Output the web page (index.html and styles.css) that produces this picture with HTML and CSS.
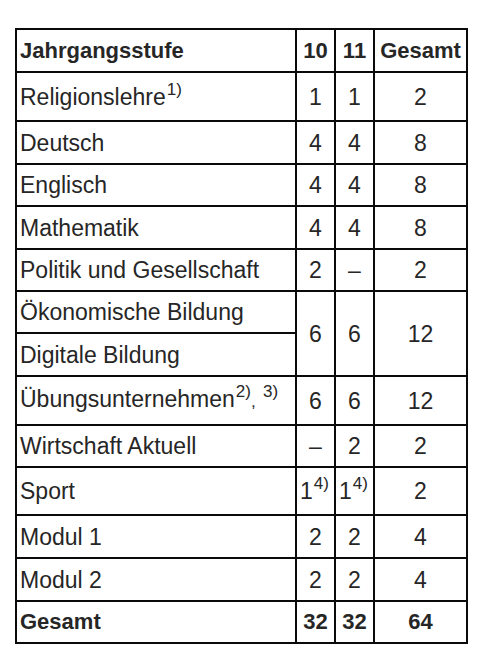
FILE: index.html
```html
<!DOCTYPE html>
<html lang="de">
<head>
<meta charset="utf-8">
<title>Stundentafel</title>
<link rel="stylesheet" href="styles.css">
</head>
<body>
<table class="plan">
  <colgroup>
    <col class="c-subject">
    <col class="c-year">
    <col class="c-year">
    <col class="c-total">
  </colgroup>
  <thead>
    <tr class="r43">
      <th class="subj">Jahrgangsstufe</th>
      <th>10</th>
      <th>11</th>
      <th>Gesamt</th>
    </tr>
  </thead>
  <tbody>
    <tr class="r49">
      <td class="subj">Religionslehre<sup>1)</sup></td>
      <td>1</td><td>1</td><td>2</td>
    </tr>
    <tr class="r43">
      <td class="subj">Deutsch</td>
      <td>4</td><td>4</td><td>8</td>
    </tr>
    <tr class="r42">
      <td class="subj">Englisch</td>
      <td>4</td><td>4</td><td>8</td>
    </tr>
    <tr class="r43">
      <td class="subj">Mathematik</td>
      <td>4</td><td>4</td><td>8</td>
    </tr>
    <tr class="r42">
      <td class="subj">Politik und Gesellschaft</td>
      <td>2</td><td>–</td><td>2</td>
    </tr>
    <tr class="r42">
      <td class="subj">Ökonomische Bildung</td>
      <td rowspan="2">6</td><td rowspan="2">6</td><td rowspan="2">12</td>
    </tr>
    <tr class="r43">
      <td class="subj">Digitale Bildung</td>
    </tr>
    <tr class="r49">
      <td class="subj">Übungsunternehmen<sup>2)</sup><span class="comma">,</span> <sup>3)</sup></td>
      <td>6</td><td>6</td><td>12</td>
    </tr>
    <tr class="r42">
      <td class="subj">Wirtschaft Aktuell</td>
      <td>–</td><td>2</td><td>2</td>
    </tr>
    <tr class="r48">
      <td class="subj">Sport</td>
      <td class="tight">1<sup>4)</sup></td><td class="tight">1<sup>4)</sup></td><td>2</td>
    </tr>
    <tr class="r43">
      <td class="subj">Modul 1</td>
      <td>2</td><td>2</td><td>4</td>
    </tr>
    <tr class="r43">
      <td class="subj">Modul 2</td>
      <td>2</td><td>2</td><td>4</td>
    </tr>
    <tr class="r42 sum">
      <td class="subj">Gesamt</td>
      <td>32</td><td>32</td><td>64</td>
    </tr>
  </tbody>
</table>
</body>
</html>
```
FILE: styles.css
```css
html, body {
  margin: 0;
  padding: 0;
  background: #ffffff;
}

body {
  font-family: "Liberation Sans", Arial, sans-serif;
  color: #262626;
}

.plan {
  margin: 28px 0 0 15px;
  width: 451px;
  border-collapse: collapse;
  table-layout: fixed;
  font-size: 23px;
}

.c-subject { width: 280px; }
.c-year { width: 39px; }
.c-total { width: 93px; }

.plan th,
.plan td {
  border: 2px solid #0a0a0a;
  padding: 0 3px;
  text-align: center;
  vertical-align: middle;
  line-height: 26px;
  white-space: nowrap;
  overflow: visible;
}

.plan th {
  font-weight: bold;
  font-size: 22px;
}

.plan .subj {
  text-align: left;
}

.plan .sum td {
  font-weight: bold;
  font-size: 22px;
}

.plan td.tight {
  padding: 0 1px 0 3px;
  text-align: left;
}

.r42 > * { height: 40px; }
.r43 > * { height: 41px; }
.r48 > * { height: 46px; }
.r49 > * { height: 47px; }

.plan sup {
  font-size: 17px;
  line-height: 0;
  vertical-align: 10px;
  margin-left: 1px;
}

.comma {
  font-size: 17px;
}
```
